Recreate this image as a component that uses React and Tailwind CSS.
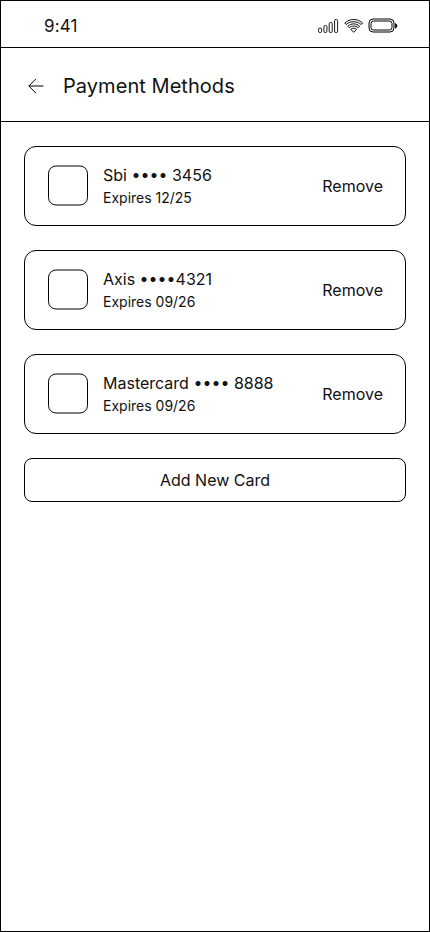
import React from "react";

const cards = [
  { label: "Sbi •••• 3456", expires: "Expires 12/25" },
  { label: "Axis ••••4321", expires: "Expires 09/26" },
  { label: "Mastercard •••• 8888", expires: "Expires 09/26" },
];

function StatusIcons() {
  return (
    <svg width="80" height="16" viewBox="318 18 80 16" fill="none" stroke="#000">
      <g strokeWidth="0.9">
        <rect x="318.6" y="28" width="3" height="4.5" rx="1.2" />
        <rect x="323.9" y="25.5" width="3" height="7" rx="1.2" />
        <rect x="329.2" y="22.5" width="3" height="10" rx="1.2" />
        <rect x="334.600" y="19.5" width="3" height="13" rx="1.2" />
      </g>
      <g strokeWidth="0.95" strokeLinejoin="round">
        <path d="M344.8 23 C349.8 18.3 357.6 18.3 362.6 23 L361.2 24.5 C357.1 20.8 350.3 20.8 346.2 24.5 Z" />
        <path d="M347.8 26.2 C351.1 23.1 356.3 23.1 359.6 26.2 L358.1 27.7 C355.7 25.5 351.7 25.5 349.3 27.7 Z" />
        <path d="M350.8 29.3 C352.4 27.8 355 27.8 356.6 29.3 L353.7 32.3 Z" />
      </g>
      <rect x="369" y="19" width="25" height="13" rx="4" />
      <rect x="371" y="21" width="21" height="9" rx="2.5" />
      <path d="M395.5 23.5 C397.4 24.4 397.4 27.2 395.5 28.1 Z" fill="#000" strokeWidth="0.8" />
    </svg>
  );
}

function PaymentCard({ label, expires }) {
  return (
    <div className="flex h-20 items-start rounded-xl border border-black pr-[22px] pl-[23px]">
      <svg className="mt-[18px] shrink-0" width="40" height="41" fill="none" stroke="#000">
        <rect x="0.5" y="1" width="39" height="39" rx="7.5" />
      </svg>
      <div className="mt-4 ml-[15px] flex-1">
        <div className="text-base leading-6">{label}</div>
        <div className="text-sm leading-[21px]">{expires}</div>
      </div>
      <button className="mt-[27px] text-base leading-6">Remove</button>
    </div>
  );
}

export default function App() {
  return (
    <div className="flex h-[932px] w-[430px] flex-col border border-black bg-white font-['Inter',sans-serif] text-[#111]">
      <div className="flex h-[47px] items-center justify-between border-b border-black pr-[31px] pl-[43px]">
        <span className="mt-1 text-[17px] leading-[22px] tracking-[0.1px]">9:41</span>
        <div className="mt-1">
          <StatusIcons />
        </div>
      </div>
      <header className="flex h-[74px] items-center border-b border-black pl-[27px]">
        <svg className="mt-0.5" width="16" height="16" viewBox="0 0 16 16" fill="none" stroke="#000" strokeWidth="1">
          <path d="M15.5 8H0.8M8 0.8L0.8 8L8 15.2" />
        </svg>
        <h1 className="mt-0.5 ml-[19px] text-xl leading-[30px] tracking-[0.05px]">Payment Methods</h1>
      </header>
      <main className="flex flex-col gap-6 px-[23px] pt-6">
        {cards.map((card) => (
          <PaymentCard key={card.label} {...card} />
        ))}
        <button className="h-11 rounded-lg border border-black text-base leading-6">
          Add New Card
        </button>
      </main>
    </div>
  );
}
